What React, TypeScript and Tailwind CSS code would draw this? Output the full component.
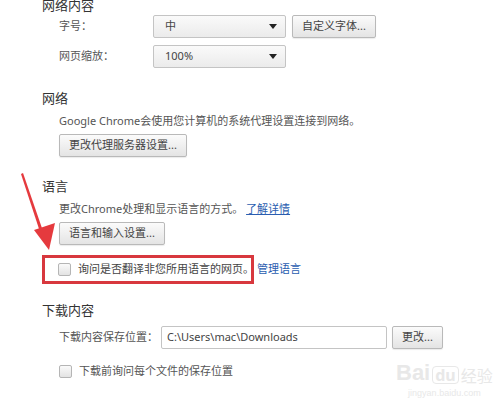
import React from "react";

const font = { fontFamily: '"Noto Sans", "Noto Sans CJK SC", sans-serif' };

function Btn({ children, className = "" }: { children: React.ReactNode; className?: string }) {
  return (
    <div
      className={`h-[23px] px-[9px] flex items-center whitespace-nowrap border border-[#b9b9b9] rounded-[2px] bg-gradient-to-b from-[#fbfbfb] to-[#e4e4e4] text-[11px] text-[#444] shadow-[0_1px_1px_rgba(0,0,0,0.08)] ${className}`}
    >
      {children}
    </div>
  );
}

function Select({ value }: { value: string }) {
  return (
    <div className="w-[133px] h-[23px] pl-[11px] pr-[8px] flex items-center justify-between border border-[#c4c4c4] rounded-[2px] bg-gradient-to-b from-[#fafafa] to-[#ebebeb] text-[11px] text-[#444]">
      <span>{value}</span>
      <svg width="8" height="5" viewBox="0 0 8 5">
        <path d="M0 0h8L4 5z" fill="#222" />
      </svg>
    </div>
  );
}

function Checkbox() {
  return <div className="w-[13px] h-[13px] shrink-0 border border-[#b5b5b5] rounded-[2px] bg-gradient-to-b from-[#fafafa] to-[#e3e3e3]" />;
}

export default function App() {
  return (
    <div className="relative w-[500px] h-[409px] overflow-hidden bg-white" style={font}>
      <div className="pl-[42px]">
        {/* 网络内容 */}
        <div className="-mt-[5px] h-[20px] text-[13px] leading-[20px] text-[#333]">网络内容</div>
        <div className="pl-[17px] flex flex-col gap-[7px]">
          <div className="flex items-center">
            <span className="w-[94px] text-[11px] text-[#555]">字号：</span>
            <Select value="中" />
            <Btn className="ml-[6px]">自定义字体...</Btn>
          </div>
          <div className="flex items-center">
            <span className="w-[94px] text-[11px] text-[#555]">网页缩放：</span>
            <Select value="100%" />
          </div>
        </div>

        {/* 网络 */}
        <div className="mt-[20px] h-[20px] text-[13px] leading-[20px] text-[#333]">网络</div>
        <div className="pl-[17px]">
          <div className="mt-[5px] text-[11px] leading-[16px] text-[#555]">
            Google Chrome会使用您计算机的系统代理设置连接到网络。
          </div>
          <Btn className="mt-[5px] w-fit">更改代理服务器设置...</Btn>
        </div>

        {/* 语言 */}
        <div className="mt-[19px] h-[20px] text-[13px] leading-[20px] text-[#333]">语言</div>
        <div className="pl-[17px]">
          <div className="mt-[5px] text-[11px] leading-[16px] text-[#555]">
            更改Chrome处理和显示语言的方式。 <span className="text-[#2a5db0] underline">了解详情</span>
          </div>
          <Btn className="mt-[5px] w-fit">语言和输入设置...</Btn>
        </div>
        <div className="mt-[10px] flex items-center">
          <div className="w-[212px] h-[29px] border-[3px] border-[#d8383e] pl-[13px] flex items-center gap-[7px]">
            <Checkbox />
            <span className="text-[11px] whitespace-nowrap text-[#444]">询问是否翻译非您所用语言的网页。</span>
          </div>
          <span className="ml-[3px] text-[11px] text-[#2a5db0]">管理语言</span>
        </div>

        {/* 下载内容 */}
        <div className="mt-[16px] h-[20px] text-[13px] leading-[20px] text-[#333]">下载内容</div>
        <div className="pl-[17px]">
          <div className="mt-[6px] flex items-center">
            <span className="w-[102px] whitespace-nowrap text-[11px] text-[#555]">下载内容保存位置：</span>
            <div className="w-[226px] h-[23px] px-[5px] flex items-center border border-[#c4c4c4] rounded-[2px] bg-white text-[11px] text-[#444]">
              C:\Users\mac\Downloads
            </div>
            <Btn className="ml-[5px]">更改...</Btn>
          </div>
          <div className="mt-[14px] flex items-center gap-[7px]">
            <Checkbox />
            <span className="text-[11px] text-[#555]">下载前询问每个文件的保存位置</span>
          </div>
        </div>
      </div>

      {/* annotation arrow */}
      <svg className="absolute left-0 top-0" width="500" height="409" viewBox="0 0 500 409">
        <path d="M21 174 L23 173 L44 234 L41 235 Z" fill="#e53a3e" />
        <path d="M34 230 L55 223 L49 250 Z" fill="#e53a3e" />
      </svg>

      {/* watermark */}
      <div className="absolute left-[396px] top-[362px] flex flex-col items-center text-[#e8e8e8]">
        <div className="flex items-end gap-[2px]">
          <span className="text-[22px] font-bold leading-none" style={{ fontFamily: '"Liberation Sans", sans-serif' }}>Bai</span>
          <span className="text-[16px] leading-none px-[2px] rounded border border-[#e8e8e8] font-bold">du</span>
          <span className="text-[16px] leading-none">经验</span>
        </div>
        <span className="text-[9px] mt-[3px]" style={{ fontFamily: '"Liberation Sans", sans-serif' }}>jingyan.baidu.com</span>
      </div>
    </div>
  );
}
